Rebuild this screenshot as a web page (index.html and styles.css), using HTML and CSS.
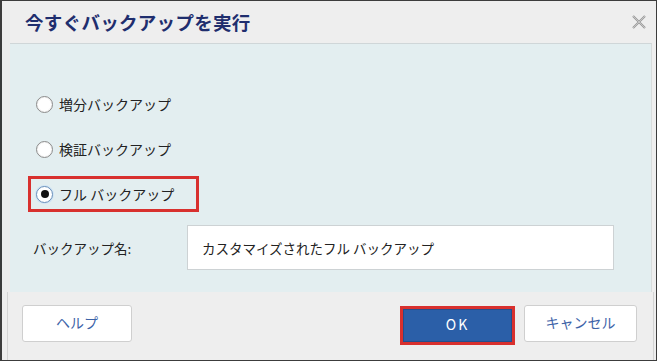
FILE: index.html
```html
<!DOCTYPE html>
<html lang="ja">
<head>
<meta charset="utf-8">
<link rel="stylesheet" href="styles.css">
</head>
<body>
<div class="dialog">
  <div class="titlebar">
    <span class="title">今すぐバックアップを実行</span>
    <svg class="close" width="16" height="16" viewBox="0 0 16 16">
      <path d="M2 2 L14 14 M14 2 L2 14" stroke="#9a9a9a" stroke-width="2.2" fill="none"/>
      <path d="M2 2 L14 14 M14 2 L2 14" stroke="#e0e0e0" stroke-width="0.6" fill="none"/>
    </svg>
  </div>
  <div class="panel">
    <div class="options">
      <label class="opt"><span class="radio"></span><span class="opt-text">増分バックアップ</span></label>
      <label class="opt"><span class="radio"></span><span class="opt-text">検証バックアップ</span></label>
      <label class="opt opt-hl"><span class="radio checked"></span><span class="opt-text">フル バックアップ</span></label>
    </div>
    <div class="name-row">
      <span class="name-label">バックアップ名:</span>
      <div class="name-input">カスタマイズされたフル バックアップ</div>
    </div>
  </div>
  <div class="footer">
    <button class="btn">ヘルプ</button>
    <div class="right-btns">
      <div class="ok-frame"><button class="btn btn-ok">OK</button></div>
      <button class="btn btn-cancel">キャンセル</button>
    </div>
  </div>
</div>
</body>
</html>
```

FILE: styles.css
```css
* { box-sizing: border-box; }
html, body { margin: 0; padding: 0; background: #ffffff; }
body { font-family: "Noto Sans CJK JP", "Noto Sans", sans-serif; }

.dialog {
  width: 657px;
  height: 361px;
  border: 1px solid #3c3c3c;
  border-left-width: 2px;
  background: #eeeeee;
  display: flex;
  flex-direction: column;
}

.titlebar {
  height: 42px;
  display: flex;
  align-items: center;
  justify-content: space-between;
  padding: 0 7px 0 23px;
}
.title {
  font-size: 18.5px;
  font-weight: bold;
  color: #1f2e6e;
  letter-spacing: 0.3px;
}
.close { display: block; margin-right: 2px; }

.panel {
  margin: 0 4px 0 8px;
  height: 249px;
  background: #e3eef0;
  border-top: 1px solid #cfd6d8;
  border-right: 1px solid #d8dcdc;
  padding: 42px 0 0 18px;
}

.options {
  display: flex;
  flex-direction: column;
  gap: 9px;
}
.opt {
  display: flex;
  align-items: center;
  gap: 6px;
  width: 171px;
  height: 36px;
  padding-left: 5px;
  border: 3px solid transparent;
  font-size: 14px;
  color: #222;
}
.opt-hl { border-color: #d8302e; }
.opt-text { line-height: 1; }

.radio {
  width: 17px;
  height: 17px;
  border-radius: 50%;
  border: 1px solid #8a8a8a;
  background: #ffffff;
  box-shadow: inset 0 0 0 1px #f4f4f4;
  position: relative;
}
.radio.checked {
  border-color: #6a8fb8;
  box-shadow: 0 0 0 1px #cfe4f5;
}
.radio.checked::after {
  content: "";
  position: absolute;
  left: 3.5px;
  top: 3.5px;
  width: 8px;
  height: 8px;
  border-radius: 50%;
  background: #111;
}

.name-row {
  display: flex;
  align-items: center;
  margin-top: 13px;
}
.name-label {
  width: 159px;
  padding-left: 5px;
  font-size: 13.5px;
  color: #222;
}
.name-input {
  width: 427px;
  height: 45px;
  background: #ffffff;
  border: 1px solid #cdd2d4;
  display: flex;
  align-items: center;
  padding-left: 14px;
  font-size: 13.5px;
  color: #222;
}

.footer {
  flex: 1;
  display: flex;
  align-items: flex-start;
  justify-content: space-between;
  padding: 13px 16px 0 14px;
  border-left: 1px solid #d4d4d4;
  border-right: 1px solid #d4d4d4;
  margin: 0 2px 0 5px;
}
.right-btns {
  display: flex;
  align-items: flex-start;
  gap: 9px;
}
.btn {
  width: 110px;
  height: 37px;
  background: #ffffff;
  border: 1px solid #cfcfcf;
  border-radius: 3px;
  font-family: "Noto Sans CJK JP", "Noto Sans", sans-serif;
  font-size: 14px;
  color: #3d63a8;
  padding: 0 0 4px 0;
}
.btn-cancel { width: 113px; }
.ok-frame {
  border: 3px solid #d8302e;
  margin-top: 1px;
}
.btn-ok {
  width: 109px;
  height: 33px;
  background: #2b5fa8;
  border: 1px solid #244f8d;
  border-radius: 0;
  color: #ffffff;
  letter-spacing: 2px;
  display: block;
}
```
